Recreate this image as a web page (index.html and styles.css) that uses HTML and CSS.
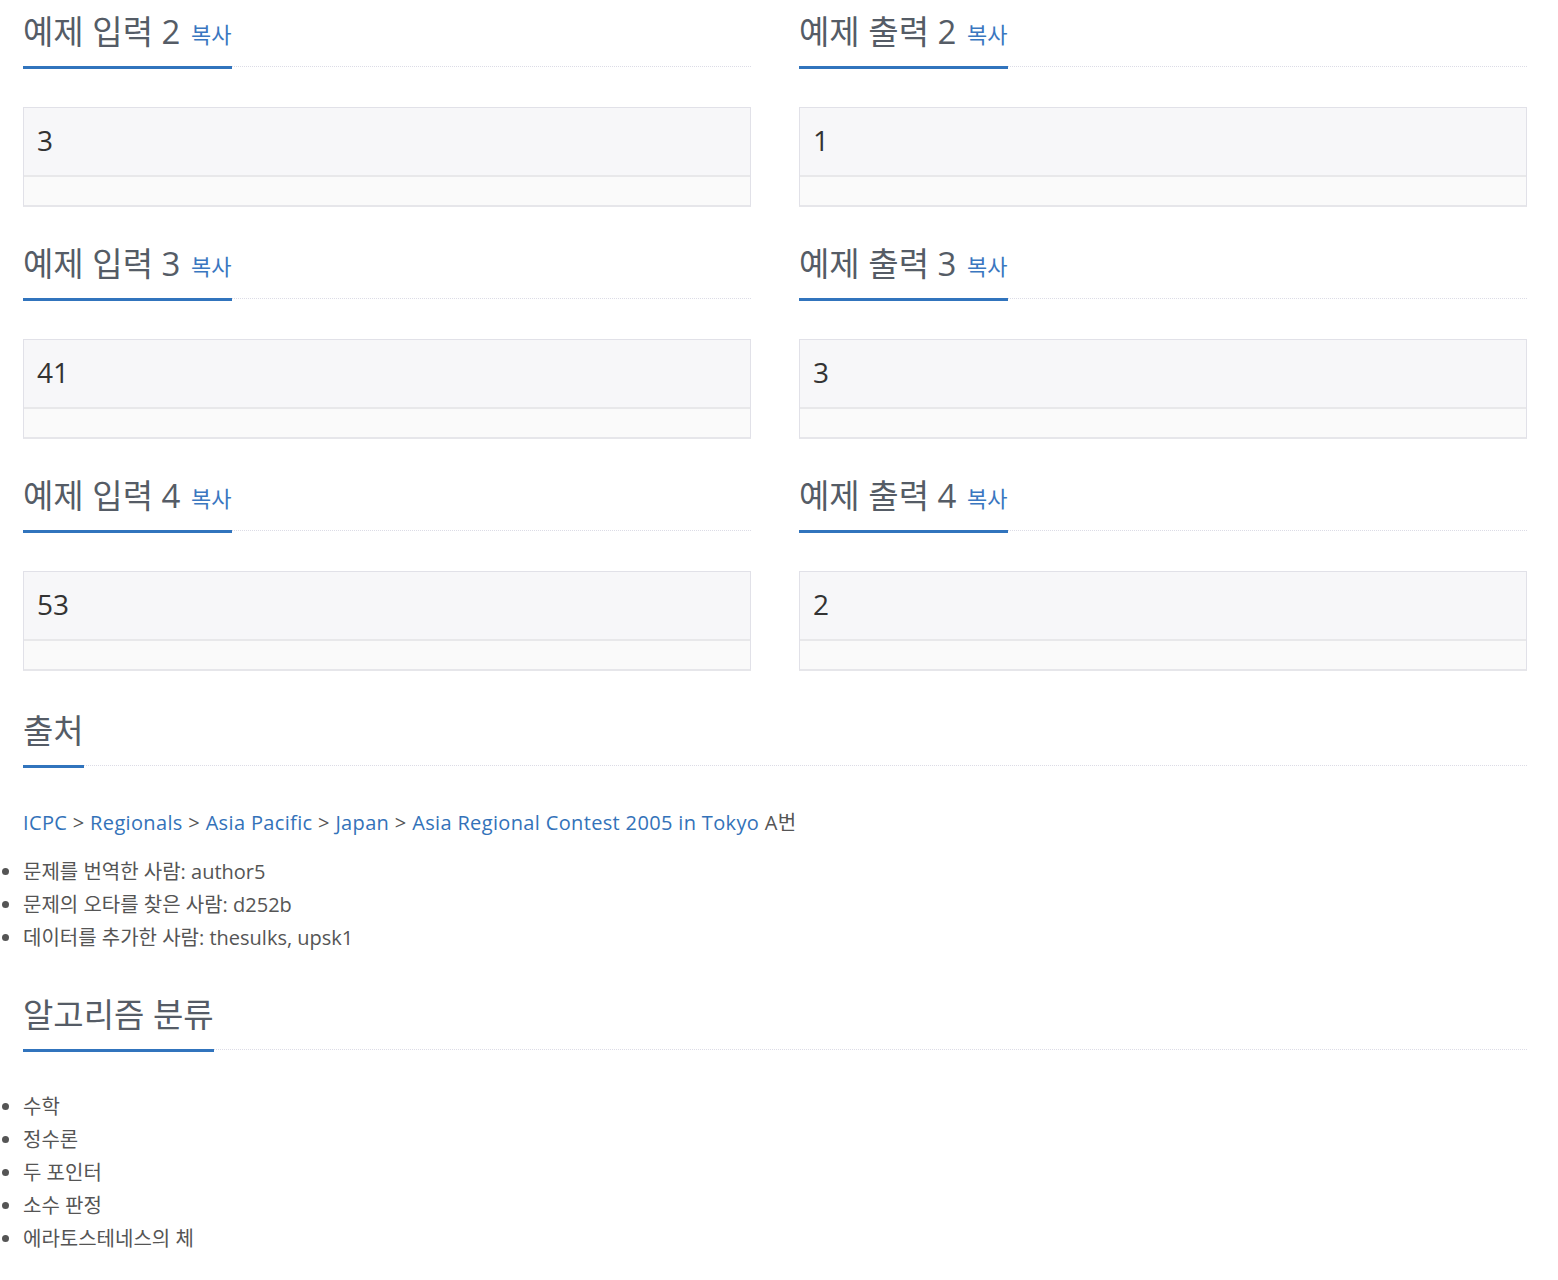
FILE: index.html
```html
<!DOCTYPE html>
<html lang="ko">
<head>
<meta charset="utf-8">
<title>예제</title>
<link rel="stylesheet" href="styles.css">
</head>
<body>
<div class="page">
  <div class="row">
    <section class="sample">
      <div class="headline"><h2>예제 입력 2 <button class="copy">복사</button></h2></div>
      <div class="sampledata"><pre class="data">3</pre><div class="scroll"></div></div>
    </section>
    <section class="sample">
      <div class="headline"><h2>예제 출력 2 <button class="copy">복사</button></h2></div>
      <div class="sampledata"><pre class="data">1</pre><div class="scroll"></div></div>
    </section>
  </div>
  <div class="row">
    <section class="sample">
      <div class="headline"><h2>예제 입력 3 <button class="copy">복사</button></h2></div>
      <div class="sampledata"><pre class="data">41</pre><div class="scroll"></div></div>
    </section>
    <section class="sample">
      <div class="headline"><h2>예제 출력 3 <button class="copy">복사</button></h2></div>
      <div class="sampledata"><pre class="data">3</pre><div class="scroll"></div></div>
    </section>
  </div>
  <div class="row">
    <section class="sample">
      <div class="headline"><h2>예제 입력 4 <button class="copy">복사</button></h2></div>
      <div class="sampledata"><pre class="data">53</pre><div class="scroll"></div></div>
    </section>
    <section class="sample">
      <div class="headline"><h2>예제 출력 4 <button class="copy">복사</button></h2></div>
      <div class="sampledata"><pre class="data">2</pre><div class="scroll"></div></div>
    </section>
  </div>

  <section class="block">
    <div class="headline"><h2>출처</h2></div>
    <div class="content">
      <p class="source"><a href="#">ICPC</a> &gt; <a href="#">Regionals</a> &gt; <a href="#">Asia Pacific</a> &gt; <a href="#">Japan</a> &gt; <a href="#">Asia Regional Contest 2005 in Tokyo</a> A번</p>
      <ul class="list">
        <li>문제를 번역한 사람: author5</li>
        <li>문제의 오타를 찾은 사람: d252b</li>
        <li>데이터를 추가한 사람: thesulks, upsk1</li>
      </ul>
    </div>
  </section>

  <section class="block">
    <div class="headline"><h2>알고리즘 분류</h2></div>
    <div class="content">
      <ul class="list">
        <li>수학</li>
        <li>정수론</li>
        <li>두 포인터</li>
        <li>소수 판정</li>
        <li>에라토스테네스의 체</li>
      </ul>
    </div>
  </section>
</div>
</body>
</html>
```

FILE: styles.css
```css
html, body {
  margin: 0;
  padding: 0;
  background: #ffffff;
}

body {
  font-family: "Open Sans", "Noto Sans CJK KR", sans-serif;
  color: #555555;
  font-size: 20px;
  line-height: 33px;
}

.page {
  width: 1504px;
  margin-left: 23px;
}

.row {
  display: grid;
  grid-template-columns: 728px 728px;
  column-gap: 48px;
}

.sample {
  padding-bottom: 25px;
}

.headline {
  display: flex;
  border-bottom: 1px dotted #dcdce6;
}

.headline h2 {
  margin: 0 0 -3px 0;
  padding: 12px 0 14px 0;
  font-size: 33px;
  line-height: 40px;
  font-weight: 400;
  color: #555c66;
  border-bottom: 3px solid #3174bd;
  white-space: nowrap;
}

.copy {
  font-family: "Open Sans", "Noto Sans CJK KR", sans-serif;
  font-size: 22px;
  color: #3a77c0;
  background: none;
  border: 0;
  padding: 0;
  margin: 0 0 0 2px;
  vertical-align: 1px;
}

.sampledata {
  margin-top: 40px;
  border: 1px solid #e1e1e8;
  border-bottom-width: 2px;
  border-bottom-color: #e6e6ea;
  background: #f7f7f9;
}

.data {
  margin: 0;
  padding: 14px 13px 16px 13px;
  font-family: "Open Sans", "Noto Sans CJK KR", sans-serif;
  font-size: 28px;
  line-height: 37px;
  color: #333333;
}

.scroll {
  height: 28px;
  background: #fafafa;
  border-top: 2px solid #e8e8ea;
}

.block {
  padding-top: 3px;
  padding-bottom: 26px;
}

.content {
  padding-top: 40px;
}

.source {
  margin: 0 0 16px 0;
  letter-spacing: 0.35px;
}

.source a {
  color: #3372b9;
  text-decoration: none;
}

.list {
  margin: 0;
  padding: 0;
}

.list li {
  margin: 0;
}
```
